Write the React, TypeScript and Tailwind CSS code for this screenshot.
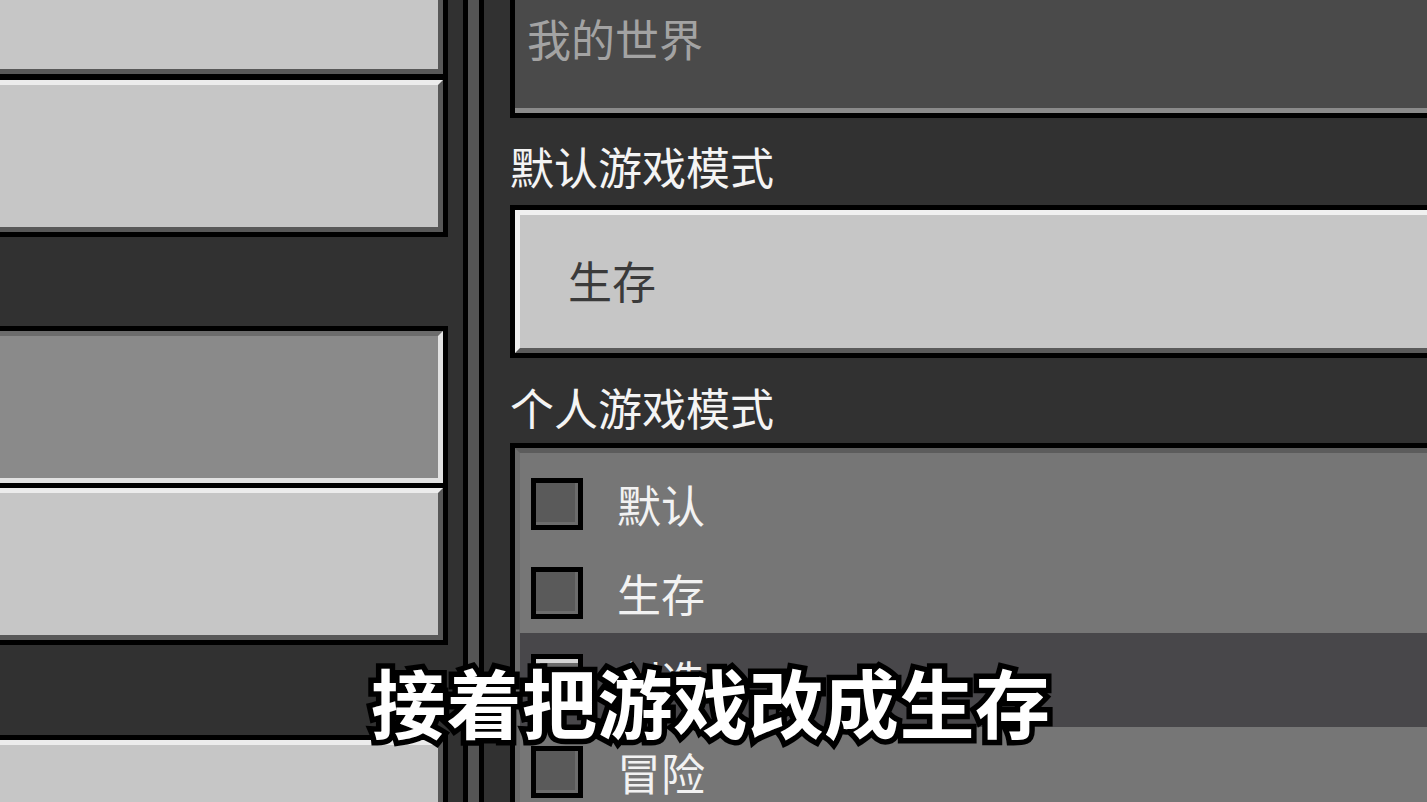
const FONT = "font-['Noto_Sans_CJK_SC','Noto_Sans',sans-serif]";

const LIGHT_BTN =
  "border-[5px] border-t-[#ececec] border-l-[#ececec] border-b-[#585858] border-r-[#585858] bg-[#c6c6c6]";
const PRESSED_BTN =
  "border-[5px] border-t-[#6c6c6c] border-l-[#6c6c6c] border-b-[#e2e2e2] border-r-[#e2e2e2] bg-[#8a8a8a]";

const modes = [
  { label: "默认", hover: false },
  { label: "生存", hover: false },
  { label: "创造", hover: true },
  { label: "冒险", hover: false },
];

function Checkbox({ hover }: { hover: boolean }) {
  return (
    <div
      className={`w-[52px] h-[52px] shrink-0 border-[5px] border-black ${
        hover
          ? "bg-[#6a6a6a] shadow-[inset_4px_4px_0_#d4d4d4]"
          : "bg-[#5a5a5a] shadow-[inset_-3px_-3px_0_#6c6c6c]"
      }`}
    />
  );
}

export default function App() {
  return (
    <div
      className={`relative w-[1427px] h-[802px] overflow-hidden bg-[#313131] flex ${FONT}`}
    >
      {/* left list of buttons, cut off at the left edge */}
      <div className="w-[448px] shrink-0 flex flex-col">
        <div className="-mt-[45px] -ml-[12px] w-[460px] border-[5px] border-black">
          <div className={`h-[114px] ${LIGHT_BTN}`} />
          <div className="h-[6px] bg-black" />
          <div className={`h-[152px] ${LIGHT_BTN}`} />
        </div>
        <div className="mt-[89px] -ml-[12px] w-[460px] border-[5px] border-black">
          <div className={`h-[152px] ${PRESSED_BTN}`} />
          <div className="h-[5px] bg-black" />
          <div className={`h-[152px] ${LIGHT_BTN}`} />
        </div>
        <div className="mt-[90px] -ml-[12px] w-[460px] border-[5px] border-black">
          <div className={`h-[152px] ${LIGHT_BTN}`} />
        </div>
      </div>

      {/* scrollbar */}
      <div className="w-[15px] shrink-0" />
      <div className="w-[21px] shrink-0 border-x-[5px] border-black bg-[#555555]" />

      {/* right settings panel */}
      <div className="w-[960px] shrink-0 pl-[26px] flex flex-col">
        <div className="-mt-[5px] border-[5px] border-black">
          <div className="h-[113px] bg-[#4a4a4a] border-b-[5px] border-b-[#8a8a8a] pl-[12px] pt-[16px]">
            <span className="text-[44px] leading-none text-[#a3a3a3]">我的世界</span>
          </div>
        </div>

        <div className="mt-[26px] h-[44px] text-[44px] leading-none text-[#f4f4f4]">
          默认游戏模式
        </div>

        <div className="mt-[17px] border-[5px] border-black">
          <div className="h-[143px] flex items-center pl-[48px] pb-[4px] border-[5px] border-t-[#f0f0f0] border-l-[#f0f0f0] border-b-[#5a5a5a] border-r-[#5a5a5a] bg-[#c6c6c6]">
            <span className="text-[44px] leading-none text-[#3a3a3a]">生存</span>
          </div>
        </div>

        <div className="mt-[27px] h-[44px] text-[44px] leading-none text-[#f4f4f4]">
          个人游戏模式
        </div>

        <div className="mt-[14px] border-[5px] border-black">
          <div className="border-t-[5px] border-l-[5px] border-t-[#5c5c5c] border-l-[#6b6b6b] bg-[#767676] pt-[6px] pb-[40px]">
            {modes.map((m) => (
              <div
                key={m.label}
                className={`flex items-center gap-[34px] pl-[11px] ${
                  m.hover ? "h-[94px] -mt-[4px] bg-[#48474a]" : "h-[89px]"
                }`}
              >
                <Checkbox hover={m.hover} />
                <span className="text-[44px] leading-none text-[#f2f2f2]">{m.label}</span>
              </div>
            ))}
          </div>
        </div>
      </div>

      {/* video subtitle */}
      <div className="absolute left-[371px] top-[663px] text-[75px] leading-none font-bold text-white tracking-[0.5px] [-webkit-text-stroke:11px_#000] [paint-order:stroke_fill] whitespace-nowrap">
        接着把游戏改成生存
      </div>
    </div>
  );
}
